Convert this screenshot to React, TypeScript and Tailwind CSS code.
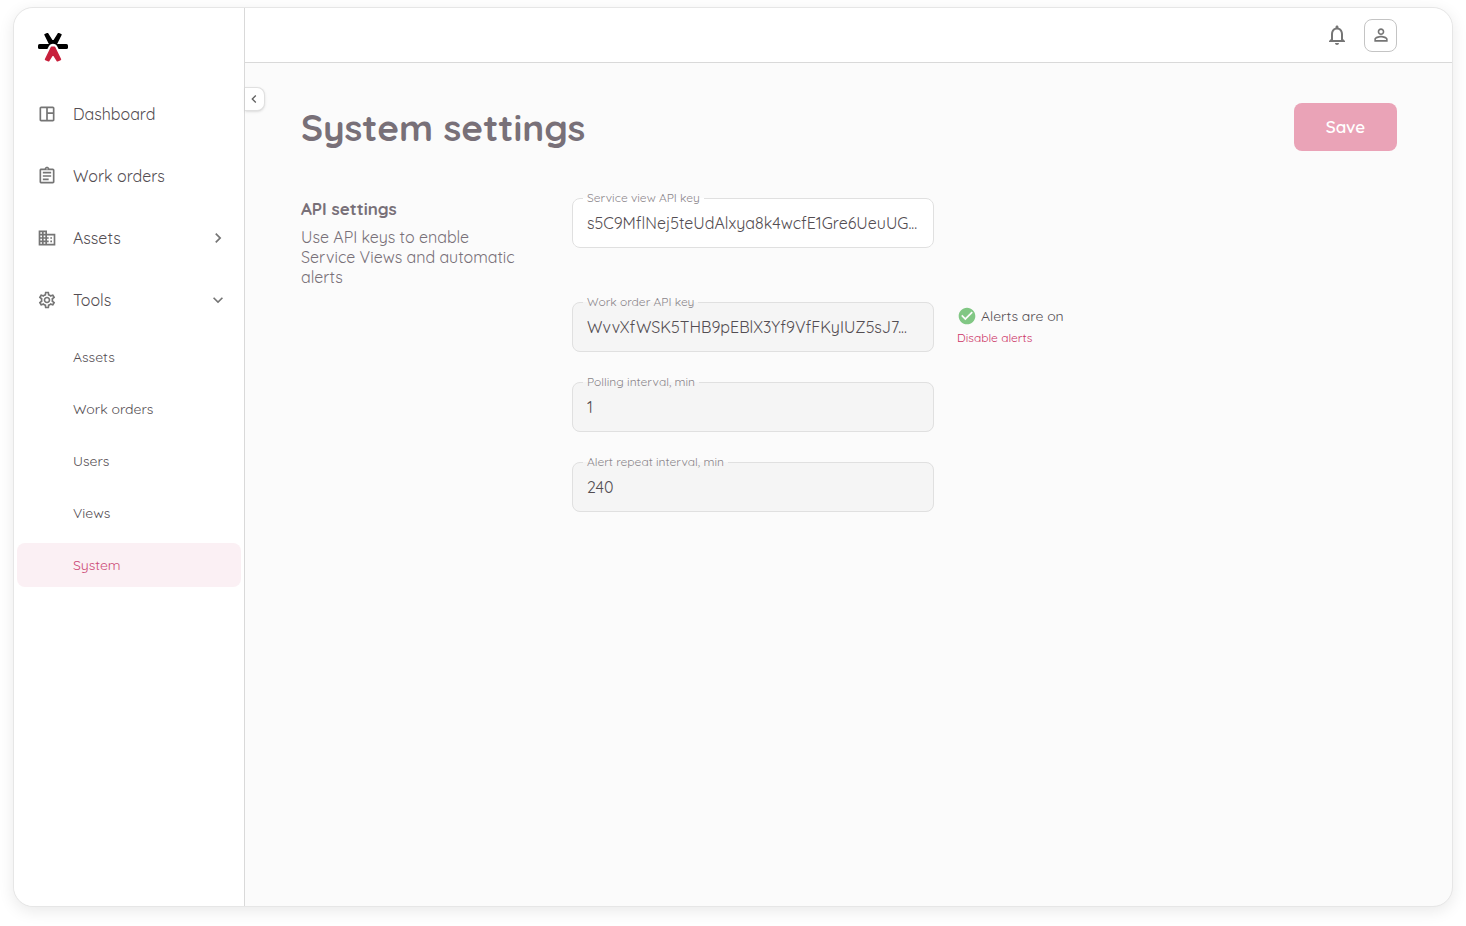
import { useState } from "react";
import type { ComponentType, ReactNode } from "react";
import {
  MdCheckCircle,
  MdChevronLeft,
  MdChevronRight,
  MdDomain,
  MdExpandMore,
  MdNotificationsNone,
  MdOutlineAssignment,
  MdOutlineSettings,
  MdOutlineSpaceDashboard,
  MdPersonOutline,
} from "react-icons/md";

interface NavItem {
  label: string;
  icon: ComponentType<{ className?: string }>;
  arrow?: ReactNode;
}

const navItems: NavItem[] = [
  { label: "Dashboard", icon: MdOutlineSpaceDashboard },
  { label: "Work orders", icon: MdOutlineAssignment },
  { label: "Assets", icon: MdDomain, arrow: <MdChevronRight className="h-5 w-5" /> },
  { label: "Tools", icon: MdOutlineSettings, arrow: <MdExpandMore className="h-5 w-5" /> },
];

const toolItems = ["Assets", "Work orders", "Users", "Views", "System"];

function Logo() {
  return (
    <svg viewBox="0 0 30 30" className="h-[30px] w-[30px]" fill="none" aria-hidden="true">
      <rect x="0" y="11" width="30" height="5" rx="1.6" fill="#000" />
      <path
        d="M7 1.6 9.6.5 14 7.6h2L20.4.5l2.6 1.1-4.6 9.4h-6.8z"
        fill="#000"
        stroke="#000"
        strokeWidth="1.4"
        strokeLinejoin="round"
      />
      {/* white halo that separates the red arrow from the black bars */}
      <path d="M9.5 26 15 15.5 20.5 26" stroke="#fff" strokeWidth="9.4" strokeLinejoin="round" />
      <path
        d="M13.6 14.2h2.8L22.4 26.4l-3 1.3L15 20.8l-4.4 6.9-3-1.3z"
        fill="#c8203c"
        stroke="#c8203c"
        strokeWidth="1.6"
        strokeLinejoin="round"
      />
    </svg>
  );
}

function Sidebar() {
  const [active, setActive] = useState("System");

  return (
    <aside className="relative w-[231px] shrink-0 rounded-l-[20px] border-r border-[#d9d9d9] bg-white px-[3px] pt-[25px]">
      <a href="#" aria-label="Home" className="ml-[21px] block w-[30px]">
        <Logo />
      </a>
      <nav className="mt-[29px]">
        <ul className="flex flex-col gap-[18px]">
          {navItems.map(({ label, icon: Icon, arrow }) => (
            <li key={label}>
              <a
                href="#"
                className="flex h-11 items-center pr-[13px] pl-5 text-base text-[#534d52]"
              >
                <Icon className="h-5 w-5 text-[#757575]" />
                <span className="ml-4 flex-1">{label}</span>
                <span className="text-[#757575]">{arrow}</span>
              </a>
            </li>
          ))}
        </ul>
        <ul className="mt-[13px] flex flex-col gap-2">
          {toolItems.map((label) => (
            <li key={label}>
              <a
                href="#"
                onClick={() => setActive(label)}
                className={
                  label === active
                    ? "flex h-11 items-center rounded-lg bg-[#fbf0f4] pl-14 text-sm text-[#cc4a76]"
                    : "flex h-11 items-center rounded-lg pl-14 text-sm text-[#534d52]"
                }
              >
                {label}
              </a>
            </li>
          ))}
        </ul>
      </nav>
      <button
        type="button"
        aria-label="Collapse menu"
        className="absolute top-[79px] left-full ml-px flex h-6 w-5 items-center justify-center rounded-r-lg border border-l-0 border-[#e0e0e0] bg-white pr-px text-[#616161] shadow-sm"
      >
        <MdChevronLeft className="h-4 w-4" />
      </button>
    </aside>
  );
}

interface FieldProps {
  id: string;
  label: string;
  value: string;
  disabled?: boolean;
}

function Field({ id, label, value, disabled }: FieldProps) {
  return (
    <fieldset
      className={
        disabled
          ? "h-14 w-[362px] rounded-lg border border-[#e0e0e0] bg-[#f5f5f5] px-[10px]"
          : "h-14 w-[362px] rounded-lg border border-[#e0e0e0] bg-white px-[10px]"
      }
    >
      <legend className="px-1 text-xs leading-3 text-[#8a858a]">
        <label htmlFor={id}>{label}</label>
      </legend>
      <input
        id={id}
        type="text"
        readOnly
        value={value}
        className="block h-[38px] w-full bg-transparent px-1 text-base text-[#534d52] outline-none"
      />
    </fieldset>
  );
}

export default function App() {
  return (
    <div className="flex min-h-screen bg-white px-[13px] pt-[7px] pb-[19px] font-['Quicksand','Lato',sans-serif]">
      <div className="flex flex-1 rounded-[20px] border border-[#e6e6e6] bg-[#fbfbfb] shadow-[0_4px_16px_rgba(0,0,0,0.09)]">
        <Sidebar />
        <div className="flex min-w-0 flex-1 flex-col">
          <header className="flex h-[55px] items-center justify-end gap-[15px] rounded-tr-[20px] border-b border-[#d9d9d9] bg-white pr-[55px] text-[#757575]">
            <button type="button" aria-label="Notifications">
              <MdNotificationsNone className="h-6 w-6" />
            </button>
            <button
              type="button"
              aria-label="Account"
              className="flex h-[33px] w-[33px] items-center justify-center rounded-lg border border-[#c4c4c4]"
            >
              <MdPersonOutline className="h-5 w-5" />
            </button>
          </header>
          <main className="pt-10 pr-[55px] pl-14">
            <div className="flex h-12 items-center justify-between">
              <h1 className="text-[37px] leading-[46px] font-bold text-[#787078]">System settings</h1>
              <button
                type="button"
                className="h-12 w-[103px] rounded-lg bg-[#eaa3b7] text-[17px] font-semibold text-white"
              >
                Save
              </button>
            </div>
            <div className="mt-[41px] flex">
              <section className="mt-[7px] w-[271px] shrink-0 pr-12 text-[#787078]">
                <h2 className="text-[17px] leading-5 font-bold">API settings</h2>
                <p className="mt-2 text-base leading-5">
                  Use API keys to enable Service Views and automatic alerts
                </p>
              </section>
              <div className="flex flex-col">
                <Field
                  id="service-key"
                  label="Service view API key"
                  value="s5C9MflNej5teUdAlxya8k4wcfE1Gre6UeuUG..."
                />
                <div className="mt-12 flex gap-[23px]">
                  <Field
                    id="order-key"
                    label="Work order API key"
                    value="WvvXfWSK5THB9pEBlX3Yf9VfFKyIUZ5sJ7..."
                    disabled
                  />
                  <div className="mt-2 flex flex-col items-start">
                    <p className="flex items-center gap-1 text-sm leading-6 text-[#534d52]">
                      <MdCheckCircle className="h-5 w-5 text-[#81c784]" />
                      Alerts are on
                    </p>
                    <button type="button" className="text-xs leading-5 text-[#cc3366]">
                      Disable alerts
                    </button>
                  </div>
                </div>
                <div className="mt-6 flex flex-col gap-6">
                  <Field id="polling" label="Polling interval, min" value="1" disabled />
                  <Field id="repeat" label="Alert repeat interval, min" value="240" disabled />
                </div>
              </div>
            </div>
          </main>
        </div>
      </div>
    </div>
  );
}
